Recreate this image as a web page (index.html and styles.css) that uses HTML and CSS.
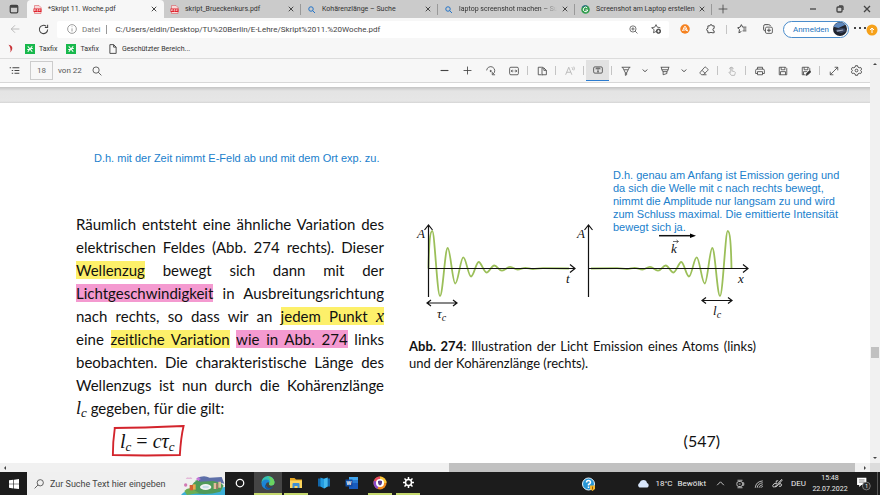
FILE: index.html
```html
<!DOCTYPE html>
<html lang="de">
<head>
  <meta charset="UTF-8">
  <meta name="viewport" content="width=device-width, initial-scale=1.0">
  <title>*Skript 11. Woche.pdf</title>
  <link rel="stylesheet" href="styles.css">
</head>
<body>
  <!-- Tabs -->
  <header class="tabs">
    <button class="tab-menu" aria-label="Tabaktionen">
      <svg class="ico s10" viewBox="0 0 16 16"><rect x="2" y="2" width="12" height="12" rx="2" stroke-width="2"/><path d="M2 4h12" stroke-width="4"/></svg>
    </button>
    <div class="tab active">
      <svg class="fav" viewBox="0 0 18 18"><path d="M3 1h9l4 4v12H3z" fill="#f6dada" stroke="#d8454c"/><path d="M1 7h16v7H1z" fill="#e0222c"/><path d="M3 12V9h2v2H3M8 9v3h2V9H8M13 12V9h2M13 11h2" fill="none" stroke="#fff"/></svg>
      <span class="tab-title">*Skript 11. Woche.pdf</span>
      <button class="close" aria-label="Tab schließen"><svg class="ico" viewBox="0 0 8 8"><path d="M1 1l6 6M7 1L1 7"/></svg></button>
    </div>
    <div class="tab">
      <svg class="fav" viewBox="0 0 18 18"><path d="M3 1h9l4 4v12H3z" fill="#f6dada" stroke="#d8454c"/><path d="M1 7h16v7H1z" fill="#e0222c"/><path d="M3 12V9h2v2H3M8 9v3h2V9H8M13 12V9h2M13 11h2" fill="none" stroke="#fff"/></svg>
      <span class="tab-title">skript_Brueckenkurs.pdf</span>
      <button class="close" aria-label="Tab schließen"><svg class="ico" viewBox="0 0 8 8"><path d="M1 1l6 6M7 1L1 7"/></svg></button>
    </div>
    <div class="tab">
      <svg class="fav" viewBox="0 0 18 18"><circle cx="8" cy="8" r="4.500" fill="none" stroke="#2474c8" stroke-width="2"/><path d="M11 11l5 5" stroke="#2474c8" stroke-width="2"/></svg>
      <span class="tab-title">Kohärenzlänge – Suche</span>
      <button class="close" aria-label="Tab schließen"><svg class="ico" viewBox="0 0 8 8"><path d="M1 1l6 6M7 1L1 7"/></svg></button>
    </div>
    <div class="tab">
      <svg class="fav" viewBox="0 0 18 18"><circle cx="8" cy="8" r="4.500" fill="none" stroke="#2474c8" stroke-width="2"/><path d="M11 11l5 5" stroke="#2474c8" stroke-width="2"/></svg>
      <span class="tab-title fade">laptop screenshot machen – Suc</span>
      <button class="close" aria-label="Tab schließen"><svg class="ico" viewBox="0 0 8 8"><path d="M1 1l6 6M7 1L1 7"/></svg></button>
    </div>
    <div class="tab">
      <svg class="fav" viewBox="0 0 18 18"><circle cx="9" cy="9" r="8.500" fill="#2f9d4c"/><path d="M9 .5a8.500 8.500 0 0 0-8 6c3-4 9-5 13-3A8 8 0 0 0 9 .5" fill="#2a5d9c"/><path d="M12.500 6a4.500 4.500 0 1 0 1 4H9" fill="none" stroke="#fff" stroke-width="2"/></svg>
      <span class="tab-title">Screenshot am Laptop erstellen</span>
      <button class="close" aria-label="Tab schließen"><svg class="ico" viewBox="0 0 8 8"><path d="M1 1l6 6M7 1L1 7"/></svg></button>
    </div>
    <button class="new-tab" aria-label="Neuer Tab"><svg class="ico s10" viewBox="0 0 16 16"><path d="M8 1v14M1 8h14"/></svg></button>
    <div class="window-buttons">
      <button aria-label="Minimieren"><svg class="ico s8" viewBox="0 0 8 8"><path d="M1 4h6"/></svg></button>
      <button aria-label="Wiederherstellen"><svg class="ico s8" viewBox="0 0 8 8"><rect x="1" y="2" width="5" height="5" rx="1"/><path d="M3 1h3q1 0 1 1v3"/></svg></button>
      <button aria-label="Schließen"><svg class="ico s8" viewBox="0 0 8 8"><path d="M1 1l6 6M7 1L1 7"/></svg></button>
    </div>
  </header>

  <!-- Adressleiste -->
  <nav class="address-bar">
    <button class="nav-btn disabled" aria-label="Zurück"><svg class="ico s10" viewBox="0 0 16 16"><path d="M15 8H2M8 2L2 8l6 6"/></svg></button>
    <button class="nav-btn" aria-label="Aktualisieren"><svg class="ico s11" viewBox="0 0 16 16"><path d="M14 8a6 6 0 1 1-2-4.500M14 1v4h-4" stroke-width="1.500"/></svg></button>
    <div class="url-box">
      <svg class="ico s10 muted" viewBox="0 0 16 16"><circle cx="8" cy="8" r="7"/><path d="M8 7v5M8 4v1"/></svg>
      <label class="scheme" for="url">Datei</label>
      <input id="url" type="text" value="C:/Users/eldin/Desktop/TU%20Berlin/E-Lehre/Skript%2011.%20Woche.pdf">
      <button aria-label="Zoom"><svg class="ico s9" viewBox="0 0 16 16"><circle cx="7" cy="7" r="5.500"/><path d="M11 11l4 4M4 7h6M7 4v6"/></svg></button>
      <button aria-label="Zu Favoriten hinzufügen"><svg class="ico s10" viewBox="0 0 16 16"><path d="M8 12l-4 2 1-5-4-3 5-1 2-4 2 4 5 1"/><circle cx="12" cy="11.500" r="3.500" fill="#555"/><path d="M12 9.500v4M10 11.500h4" stroke="#fff"/></svg></button>
    </div>
    <div class="extensions">
      <button aria-label="Avast"><svg class="s10" viewBox="0 0 20 20"><circle cx="10" cy="10" r="9.500" fill="#f58220"/><path d="M5 14l4-9q1-1 2 0l4 9-5-3-3 3M10 8v3" fill="none" stroke="#fff" stroke-width="2"/></svg></button>
      <button aria-label="Erweiterungen"><svg class="ico s10" viewBox="0 0 16 16"><path d="M3 3h3a2 2 0 0 1 4 0h3v4a2 2 0 0 0 0 4v3H9.500a2 2 0 0 0-3 0H3v-3a2 2 0 1 1 0-4z" stroke-width="1.500"/></svg></button>
      <i class="sep"></i>
      <button aria-label="Favoriten"><svg class="ico s10" viewBox="0 0 16 16"><path d="M7 12l-4 2 1-5-3-3 4-1 2-4 2 4h6M10 8h5M9 11h6" stroke-width="1.500"/></svg></button>
      <button aria-label="Sammlungen"><svg class="ico s10" viewBox="0 0 16 16"><rect x="4" y="5" width="11" height="10" rx="2"/><path d="M12 3q-1-2-3-2H3Q1 1 1 4v4q0 3 2 3M9.500 7v6M6.500 10h6" stroke-width="1.500"/></svg></button>
    </div>
    <button class="sign-in">Anmelden
      <svg class="avatar" viewBox="0 0 26 26"><circle cx="13" cy="13" r="13" fill="#20242e"/><path d="M1 9a13 13 0 0 1 22-4L10 11z" fill="#5d87bd"/><path d="M4 16q7-7 18-4l2 5-9 4z" fill="#3a4560"/><path d="M7 17l12-2" stroke="#a8b3c8" stroke-width="2"/></svg>
    </button>
    <button class="more" aria-label="Einstellungen und mehr">
      <svg viewBox="0 0 26 14"><path d="M2 6h2M7 6h2M12 6h2" stroke="#444" stroke-width="2"/><circle cx="20" cy="8" r="5.500" fill="#f6a11a"/><path d="M20 11V6M18 8l2-2 2 2" stroke="#fff" fill="none"/></svg>
    </button>
  </nav>

  <!-- Favoritenleiste -->
  <nav class="bookmarks">
    <svg class="s10" viewBox="0 0 16 16"><path d="M4 1q7 1 6 7-1 4-4 6 2-4 1-7-1-4-3-6" fill="#c9353a"/></svg>
    <a href="#"><svg class="s10" viewBox="0 0 18 18"><path d="M0 0h18v18H0z" fill="#18b84c"/><path d="M5 4l8 10M13 4L5 14M4 10h3M11 8h3" stroke="#fff" stroke-width="2"/></svg>Taxfix</a>
    <a href="#"><svg class="s10" viewBox="0 0 18 18"><path d="M0 0h18v18H0z" fill="#18b84c"/><path d="M5 4l8 10M13 4L5 14M4 10h3M11 8h3" stroke="#fff" stroke-width="2"/></svg>Taxfix</a>
    <a href="#"><svg class="ico s10" viewBox="0 0 16 16"><path d="M3 1h6l4 4v10H3zM9 1v4h4" stroke-width="1.500"/></svg>Geschützter Bereich...</a>
  </nav>

  <div class="content">
    <main class="viewer">
      <!-- PDF-Werkzeugleiste -->
      <div class="toolbar">
        <button class="tool toc" aria-label="Inhalt"><svg class="ico s11" viewBox="0 0 16 16"><path d="M5 4h10M8 8h7M8 12h7M1 4h2M4 8h2M4 12h2" stroke-width="1.500"/></svg></button>
        <input class="page-no" id="page-no" type="text" value="18">
        <label class="page-count" for="page-no">von 22</label>
        <button class="tool" aria-label="Suchen"><svg class="ico s10" viewBox="0 0 16 16"><circle cx="6.500" cy="6.500" r="5"/><path d="M10 10l5 5"/></svg></button>
        <div class="tools">
          <button class="tool" aria-label="Verkleinern"><svg class="ico s9" viewBox="0 0 16 16"><path d="M1 8h14" stroke-width="2"/></svg></button>
          <button class="tool" aria-label="Vergrößern"><svg class="ico s9" viewBox="0 0 16 16"><path d="M1 8h14M8 1v14" stroke-width="1.500"/></svg></button>
          <button class="tool" aria-label="Drehen"><svg class="ico s10" viewBox="0 0 16 16"><path d="M1 7a6.500 6.500 0 1 1 10 6M10 9.500V14h4.500" /><circle cx="7.500" cy="8" r="1" fill="#444"/></svg></button>
          <button class="tool" aria-label="An Breite anpassen"><svg class="ico s10" viewBox="0 0 16 16"><rect x="1" y="2" width="14" height="12" rx="2"/><path d="M4 8h3M9 8h3M5.500 6l-2 2 2 2M10.500 6l2 2-2 2"/></svg></button>
          <i class="sep"></i>
          <button class="tool" aria-label="Seitenansicht"><svg class="ico s10" viewBox="0 0 16 16"><path d="M7 2H2v12h5M8 1v14M8 3h3l4 4v7H8M11 3v4h4"/></svg></button>
          <i class="sep"></i>
          <button class="tool disabled" aria-label="Laut vorlesen"><svg class="ico s10" viewBox="0 0 16 16"><path d="M1 14L6 2l5 12M3 10h6M11 2q2 2 1 4M14 1q2 3 0 6"/></svg></button>
          <i class="sep"></i>
          <button class="tool selected" aria-label="Text hinzufügen"><svg class="ico s10" viewBox="0 0 16 16"><rect x="1" y="3" width="14" height="10" rx="2"/><path d="M5 7V5h6v2M8 5v6M6.500 11h3"/></svg></button>
          <i class="sep"></i>
          <button class="tool" aria-label="Zeichnen"><svg class="ico s10" viewBox="0 0 16 16"><path d="M1 2h14M2.500 2L7 11h2l4.500-9M5 6h6M7 11v4l2-1v-3"/></svg></button>
          <button class="tool narrow" aria-label="Stiftoptionen"><svg class="ico s6" viewBox="0 0 8 8"><path d="M1 2l3 3 3-3"/></svg></button>
          <button class="tool" aria-label="Hervorheben"><svg class="ico s10" viewBox="0 0 16 16"><path d="M1 2h14M2.500 2v3l2 4h7l2-4V2M3 6h10M5 9v5l6-2V9"/></svg></button>
          <button class="tool narrow" aria-label="Markeroptionen"><svg class="ico s6" viewBox="0 0 8 8"><path d="M1 2l3 3 3-3"/></svg></button>
          <button class="tool" aria-label="Löschen"><svg class="ico s10" viewBox="0 0 16 16"><path d="M9 2q1-1 2 0l3 3q1 1 0 2l-7 7H4l-2-2q-1-1 0-2zM5 7l5 5M7 14h5"/></svg></button>
          <i class="sep"></i>
          <button class="tool disabled" aria-label="Toucheingabe"><svg class="ico s10" viewBox="0 0 16 16"><path d="M6 10V3q1-2 2 0v5l4 1q2 1 1 3l-1 3H7L3 10q1-1 3 1M4 5a3 3 0 1 1 6 0"/></svg></button>
          <i class="sep"></i>
          <button class="tool" aria-label="Drucken"><svg class="ico s10" viewBox="0 0 16 16"><path d="M4 5V2h8v3M4 12H1V7q0-2 2-2h10q2 0 2 2v5h-3M4 9h8v5H4z"/></svg></button>
          <button class="tool" aria-label="Speichern"><svg class="ico s10" viewBox="0 0 16 16"><path d="M2 2h10l2 2v10H2zM5 2v4h6V2M4 14V9h8v5"/></svg></button>
          <button class="tool" aria-label="Speichern unter"><svg class="ico s10" viewBox="0 0 16 16"><path d="M7 14H2V2h10l2 2v3M5 2v4h6V2M4 14V9h6"/><path d="M8 15l1-3 5-5 2 2-5 5z" fill="#333"/></svg></button>
          <i class="sep"></i>
          <button class="tool" aria-label="Vollbild"><svg class="ico s10" viewBox="0 0 16 16"><path d="M2 14L14 2M9 2h5v5M2 9v5h5"/></svg></button>
          <button class="tool" aria-label="Einstellungen"><svg class="ico s11" viewBox="0 0 16 16"><path d="M6.500 1h3l.5 2 2 1 2-.5L15.500 6 14 8l1.500 2-1.500 2.500-2-.5-2 1-.5 2h-3L6 13l-2-1-2 .5L.5 10 2 8 .5 6 2 3.500 4 4l2-1z"/><circle cx="8" cy="8" r="2"/></svg></button>
        </div>
      </div>

      <div class="prev-page"></div>
      <div class="page-gap"></div>

      <article class="page">
        <p class="note note-left">D.h. mit der Zeit nimmt E-Feld ab und mit dem Ort exp. zu.</p>

        <section class="columns">
          <div class="text">
            <span class="line">Räumlich entsteht eine ähnliche Variation des</span>
            <span class="line">elektrischen Feldes (Abb. 274 rechts). Dieser</span>
            <span class="line"><mark>Wellenzug</mark> bewegt sich dann mit der</span>
            <span class="line"><mark class="pink">Lichtgeschwindigkeit</mark> in Ausbreitungsrichtung</span>
            <span class="line">nach rechts, so dass wir an <mark>jedem Punkt <var>x</var></mark></span>
            <span class="line">eine <mark>zeitliche Variation</mark> <mark class="pink">wie in Abb. 274</mark> links</span>
            <span class="line">beobachten. Die charakteristische Länge des</span>
            <span class="line">Wellenzugs ist nun durch die Kohärenzlänge</span>
            <span class="line last"><var>l<sub>c</sub></var> gegeben, für die gilt:</span>
          </div>

          <figure class="figure">
            <svg class="plot" viewBox="0 0 347 104">
              <defs>
                <path id="wave" d="M19.500 46.500C20 22 21 9 23.300 9S28.200 74 31 74 36 26 38.700 26 43.500 61.500 46.300 61.500 51.500 35.300 54.300 35.300 59.200 54.500 62 54.500 67 40 69.700 40 74.700 50.500 77.500 50.500 82.500 43.500 85.300 43.500 90 48.700 93 48.700 98 44.800 101 44.800 105.800 47.600 108.600 47.600 113.600 45.800 116.400 45.800 121 47 124 47 130 46.200 134 46.200L160 46.500"/>
              </defs>
              <use href="#wave" class="wave"/>
              <use href="#wave" class="wave" transform="translate(342 0) scale(-1 1)"/>
              <g class="axes">
                <path d="M19.500 75V3M15.500 8l4-5 4 5M19.500 46.500H166M161 42.500l5 4-5 4"/>
                <path d="M179.500 75V3M175.500 8l4-5 4 5M179.500 46.500H339M334 42.500l5 4-5 4"/>
                <path d="M18 81h30M22 78l-4 3 4 3M44 78l4 3-4 3"/>
                <path d="M293 78.500h30M297 75.500l-4 3 4 3M319 75.500l4 3-4 3"/>
                <path d="M250 13.700h32" stroke-width="1.500"/>
                <path d="M281 11.500l6 2.200-6 2.200z" fill="#000" stroke="none"/>
                <path d="M264 19.500h5M267.500 18l2 1.500-2 1.500" stroke-width=".6"/>
              </g>
              <g class="plot-labels">
                <text x="8" y="16">A</text>
                <text x="157" y="61">t</text>
                <text x="28" y="96">τ<tspan class="idx" dy="3">c</tspan></text>
                <text x="168" y="16">A</text>
                <text x="262" y="31">k</text>
                <text x="329" y="61">x</text>
                <text x="304" y="93">l<tspan class="idx" dy="3">c</tspan></text>
              </g>
            </svg>
            <p class="note note-right">D.h. genau am Anfang ist Emission gering und<br>da sich die Welle mit c nach rechts bewegt,<br>nimmt die Amplitude nur langsam zu und wird<br>zum Schluss maximal. Die emittierte Intensität<br>bewegt sich ja.</p>
            <figcaption>
              <span class="line"><b>Abb. 274</b>: Illustration der Licht Emission eines Atoms (links)</span>
              <span class="line last">und der Kohärenzlänge (rechts).</span>
            </figcaption>
          </figure>
        </section>

        <div class="equation">
          <div class="formula">
            <svg class="red-frame" viewBox="0 0 80 33" preserveAspectRatio="none"><path d="M3 3q30 0 75-2-3 12-4 30-37 1-72 0 0-14 2-27"/></svg>
            <var>l<sub>c</sub></var> = <var>cτ<sub>c</sub></var>
          </div>
          <span>(547)</span>
        </div>
      </article>
    </main>

    <div class="vscroll">
      <svg viewBox="0 0 10 10"><path d="M3 6l2-2 2 2z"/></svg>
      <i class="vthumb"></i>
      <svg viewBox="0 0 10 10"><path d="M3 4l2 2 2-2z"/></svg>
    </div>
  </div>

  <div class="hscroll">
    <svg viewBox="0 0 10 10"><path d="M6 3L4 5l2 2z"/></svg>
    <div class="htrack"><i class="hthumb"></i></div>
    <svg viewBox="0 0 10 10"><path d="M4 3l2 2-2 2z"/></svg>
    <i class="corner"></i>
  </div>

  <!-- Taskleiste -->
  <footer class="taskbar">
    <button class="start" aria-label="Start"><svg class="s10" viewBox="0 0 16 16"><path d="M0 2l7-1v6.500H0zM8 1l8-1v7.500H8zM0 8.500h7V15l-7-1zM8 8.500h8V16l-8-1z" fill="#fff"/></svg></button>
    <div class="search">
      <svg class="ico s10" viewBox="0 0 16 16"><circle cx="10" cy="6" r="5"/><path d="M6.500 9.500L1 15"/></svg>
      <input type="text" aria-label="Suche" placeholder="Zur Suche Text hier eingeben">
      <svg class="island" viewBox="0 0 132 66">
        <path d="M0 66q10-14 32-14l56-4 44-6v24z" fill="#3db0d8"/>
        <path d="M28 44q14-30 48-30 36 4 52 24l-10 18q-40 12-78 4z" fill="#4f9a58"/>
        <path d="M48 16q20-12 38-2l36-2 8 20-34-8-40 2z" fill="#5d6fa8"/>
        <path d="M10 54q10-12 24-6l20 12-36 6z" fill="#6cae52"/>
        <ellipse cx="74" cy="42" rx="17" ry="9" fill="#f1f4f4"/>
        <ellipse cx="74" cy="42" rx="10" ry="4" fill="#c7dfe8"/>
        <path d="M26 36h10v16H26z" fill="#d35f35"/><path d="M36 34h8v16h-8z" fill="#e9a94e"/>
        <path d="M98 30h8v18h-8zM112 26h8v18h-8z" fill="#e0bd9c"/><path d="M106 32h5v16h-5z" fill="#a16e62"/>
        <path d="M52 12v12M46 18h12" stroke="#c777da" stroke-width="4"/>
        <path d="M14 18q4-8 10-4 8-4 10 4z" fill="#e4b9d8"/><circle cx="14" cy="36" r="5" fill="#d27ab4"/>
      </svg>
    </div>
    <button class="app cortana" aria-label="Cortana"><svg class="s10" viewBox="0 0 16 16"><circle cx="8" cy="8" r="6" fill="none" stroke="#fff" stroke-width="2"/></svg></button>
    <button class="app focused running" aria-label="Edge"><svg class="s14" viewBox="0 0 28 28"><path d="M1 14A13 13 0 0 1 27 12q0 7-7 7-5 0-4-4 1-5-5-5-7 0-10 4" fill="#35c1b1"/><path d="M14 1a13 13 0 0 1 13 11q0 7-7 7-3 0-4-2 6-8-2-16" fill="#6bd35f"/><path d="M1 14q2-7 9-7 7 0 7 6-5-2-7 3-1 8 8 10-5 2-9 0-8-3-8-12" fill="#1c86d6"/><path d="M10 16q-1 8 7 8 5 0 8-4-5 9-14 6-6-4-1-10" fill="#0c57a6"/></svg></button>
    <button class="app running" aria-label="Explorer"><svg class="s14" viewBox="0 0 28 28"><path d="M2 4h9l3 3h12v5H2z" fill="#e6a520"/><path d="M2 9h24v15H2z" fill="#fbd45c"/><path d="M7 24v-8q0-2 2-2h10q2 0 2 2v8h-4v-4h-6v4z" fill="#3e8fd4"/></svg></button>
    <button class="app" aria-label="Karten"><svg class="s14" viewBox="0 0 28 28"><path d="M2 5h24v16H2z" fill="#1266a8"/><path d="M7 3l7 3 7-3v18l-7 4-7-4z" fill="#239be0"/><path d="M14 6l7-3v18l-7 4z" fill="#45b9ee"/></svg></button>
    <button class="app" aria-label="Word"><svg class="s14" viewBox="0 0 28 28"><path d="M8 2h18v6H8z" fill="#41a5ee"/><path d="M8 8h18v6H8z" fill="#2b7cd3"/><path d="M8 14h18v12H8z" fill="#185abd"/><path d="M1 7h14v14H1z" fill="#104a9e"/><text x="3" y="18" class="word-w">W</text></svg></button>
    <button class="app running" aria-label="Avast Secure Browser"><svg class="s14" viewBox="0 0 28 28"><circle cx="14" cy="14" r="13" fill="#f28a1e"/><path d="M14 1a13 13 0 0 1 13 13H14z" fill="#f9c73c"/><path d="M2 9A13 13 0 0 0 9 26l5-12z" fill="#8a49c8"/><path d="M2 9A13 13 0 0 1 14 1v13z" fill="#e84a5f"/><circle cx="14" cy="14" r="8" fill="#fff"/><path d="M14 9l4 1v4q-1 4-4 5-3-1-4-5v-4z" fill="#5a3c8c"/></svg></button>
    <button class="app running" aria-label="Einstellungen"><svg class="s11" viewBox="0 0 22 22"><circle cx="11" cy="11" r="6" fill="none" stroke="#fff" stroke-width="3"/><path d="M11 0v4M11 18v4M0 11h4M18 11h4M3 3l3 3M16 16l3 3M19 3l-3 3M6 16l-3 3" stroke="#fff" stroke-width="3"/></svg></button>

    <div class="tray">
      <button class="help" aria-label="Hilfe"><svg class="s14" viewBox="0 0 28 28"><circle cx="13" cy="14" r="12" fill="#2595d6" stroke="#e8f4fb" stroke-width="2"/><path d="M9 11q0-4 4-4t4 4q0 2-4 4v2M13 19v3" fill="none" stroke="#fff" stroke-width="3"/><path d="M16 17h10v7l-5 4-5-4z" fill="#f5b82e"/><path d="M21 19v6" stroke="#a05c00" stroke-width="2"/></svg></button>
      <button class="weather"><svg viewBox="0 0 26 18"><path d="M5 17a5 5 0 0 1 0-9q2-6 8-6 6 0 7 6a5 5 0 0 1 1 9z" fill="#d8e6fa"/></svg><span>18°C</span><span>Bewölkt</span></button>
      <button class="tray-btn" aria-label="Ausgeblendete Symbole"><svg class="ico s9" viewBox="0 0 16 16"><path d="M2 11l6-6 6 6" stroke-width="1.500"/></svg></button>
      <button class="tray-btn" aria-label="Energie"><svg class="ico s10" viewBox="0 0 16 16"><rect x="3" y="4" width="9" height="8" rx="3"/><path d="M12 6h2v4h-2M4 2h8M4 14h8M6 8h3"/></svg></button>
      <button class="tray-btn" aria-label="WLAN"><svg class="ico s10" viewBox="0 0 16 16"><path d="M2 14Q3 4 14 3M5 14q1-7 9-8M8 14q1-4 6-5M11 14q1-2 3-2"/></svg></button>
      <button class="tray-btn" aria-label="Stift"><svg class="ico s11" viewBox="0 0 16 16"><path d="M6 11L14 2l1 1-8 9-2 1zM9 4q-4-1-3 3M7 8q-5-1-6 3 0 3 3 2l2-2M10 9q4-2 4 1t-4 2"/></svg></button>
      <button class="lang">DEU</button>
      <button class="clock"><span>15:48</span><span>22.07.2022</span></button>
      <button class="notify" aria-label="Benachrichtigungen"><svg viewBox="0 0 42 42"><path d="M3 5h26v20H15l-6 6v-6H3z" fill="#fff"/><path d="M8 11h16M8 17h16" stroke="#555" stroke-width="2"/><circle cx="29" cy="28" r="11" fill="#2a2a2a" stroke="#999" stroke-width="2"/><text x="25" y="34" class="badge-no">1</text></svg></button>
    </div>
  </footer>
</body>
</html>
```
FILE: styles.css
```css
* { box-sizing: border-box; }
body { margin: 0; height: 100vh; display: flex; flex-direction: column; overflow: hidden; background: #fff; color: #333; font-family: Roboto, "Open Sans", sans-serif; font-size: 8px; }
button { padding: 0; border: none; background: none; color: inherit; font: inherit; display: flex; align-items: center; justify-content: center; flex: none; }
input { border: none; outline: none; padding: 0; margin: 0; background: none; color: inherit; font: inherit; min-width: 0; }
svg { display: block; flex: none; }

/* icons */
.ico { fill: none; stroke: #444; stroke-width: 1.3; }
.ico.muted { stroke: #888; }
.s6 { width: 6px; height: 6px; }
.s8 { width: 8px; height: 8px; }
.s9 { width: 9px; height: 9px; }
.s10 { width: 10px; height: 10px; }
.s11 { width: 11px; height: 11px; }
.s14 { width: 14px; height: 14px; }
.disabled { opacity: 0.4; }
.sep { width: 1px; height: 9px; margin: 0 2px; background: #c4c4c4; flex: none; }

/* tabs */
.tabs { display: flex; height: 18px; flex: none; background: #cbcbcb; font-size: 7px; }
.tab-menu { width: 27px; }
.tab { flex: 0 1 137px; min-width: 0; display: flex; align-items: center; padding: 0 6px; position: relative; }
.tab + .tab::after { content: ""; position: absolute; right: 0; top: 4px; height: 11px; width: 1px; background: #999; }
.tab.active { background: #f7f7f7; border-radius: 4px 4px 0 0; }
.fav { width: 9px; height: 9px; margin-right: 6px; }
.tab-title { flex: 1; min-width: 0; white-space: nowrap; }
.fade { -webkit-mask-image: linear-gradient(to right, #000 85%, transparent); mask-image: linear-gradient(to right, #000 85%, transparent); }
.close { width: 8px; margin-left: 4px; }
.close .ico { width: 6px; height: 6px; }
.new-tab { width: 22px; }
.window-buttons { margin-left: auto; display: flex; }
.window-buttons button { width: 27px; }

/* address bar */
.address-bar { display: flex; align-items: center; height: 22px; flex: none; background: #f7f7f7; }
.nav-btn { width: 26px; }
.nav-btn:first-child { width: 30px; }
.url-box { flex: 1; display: flex; align-items: center; height: 17px; margin-left: 1px; padding: 0 2px 0 10px; background: #fff; border-radius: 2px; }
.scheme { margin-left: 5px; padding-right: 6px; color: #777; }
.url-box input { flex: 1; padding-left: 8px; border-left: 1px solid #999; line-height: 9px; height: 9px; color: #444; }
.url-box button { width: 22px; }
.extensions { display: flex; align-items: center; padding: 0 2px 0 3px; }
.extensions button { width: 26px; }
.sign-in { height: 17px; padding: 0 1px 0 9px; gap: 4px; border: 1px solid #4a8ccb; border-radius: 9px; background: #fff; color: #2372bd; }
.avatar { width: 14px; height: 14px; }
.more { width: 31px; }
.more svg { width: 26px; height: 14px; }

/* bookmarks */
.bookmarks { display: flex; align-items: center; gap: 9px; height: 19px; flex: none; padding: 0 6px; background: #f7f7f7; border-bottom: 1px solid #dcdcdc; font-size: 7px; }
.bookmarks a { display: flex; align-items: center; gap: 4px; color: inherit; text-decoration: none; }

/* pdf viewer */
.content { flex: 1; min-height: 0; display: flex; }
.viewer { flex: 1; min-width: 0; display: flex; flex-direction: column; overflow: hidden; }
.toolbar { display: flex; align-items: center; height: 24px; flex: none; padding-right: 2px; background: #f7f7f7; border-bottom: 1px solid #d8d8d8; }
.tool { width: 23px; height: 21px; }
.tool.narrow { width: 16px; }
.tool.toc { width: 28px; }
.tool.selected { background: #e2e2e2; border-bottom: 1px solid #2b7cd0; }
.page-no { width: 23px; height: 19px; margin-left: 2px; border: 1px solid #ccc; text-align: center; color: #666; }
.page-count { padding: 0 4px 0 5px; color: #555; }
.tools { margin-left: auto; display: flex; align-items: center; }
.prev-page { height: 4px; flex: none; }
.page-gap { height: 16px; flex: none; background: linear-gradient(#c4c4c4, #e4e4e4 4px, #e6e6e6 14px, #d4d4d4); }
.page { position: relative; flex: 1; padding: 110px 114px 0 76px; color: #111; font-family: Lato, "Open Sans", sans-serif; font-size: 15px; font-variant-ligatures: none; }
.columns { display: grid; grid-template-columns: 308fr 347fr; gap: 25px; }
.line { display: block; white-space: nowrap; text-align: justify; text-align-last: justify; }
.line.last { text-align-last: left; }
.text { line-height: 23px; min-width: 0; }
mark { background: #fdf06a; color: inherit; }
mark.pink { background: #f49ad0; }
var { font-family: "Liberation Serif", serif; font-size: 18px; line-height: 1; }
sub { font-size: 13px; line-height: 0; vertical-align: -3px; }

.note { position: absolute; margin: 0; color: #2080cc; font: 11px/13px "Liberation Sans", Arial, sans-serif; white-space: nowrap; }
.note-left { left: 94px; top: 49px; }
.figure { position: relative; margin: 9px 0 0; min-width: 0; }
.note-right { left: 204px; top: -53px; }
.plot { width: 100%; overflow: visible; }
.wave { fill: none; stroke: #9bbf59; stroke-width: 1.8; }
.axes { fill: none; stroke: #111; stroke-width: 1.2; }
.plot-labels { fill: #111; font: italic 13px "Liberation Serif", serif; }
.idx { font-size: 10px; }
figcaption { margin-top: 12px; font-size: 13px; line-height: 17px; }

.equation { display: flex; align-items: center; justify-content: space-between; height: 31px; margin-top: 5px; padding: 0 36px 0 35px; font-size: 16px; }
.formula { position: relative; padding: 0 11px 0 9px; font-family: "Liberation Serif", serif; font-size: 20px; line-height: 24px; }
.formula var { font-size: 20px; }
.red-frame { position: absolute; left: 0; top: -4px; width: 100%; height: 32px; fill: none; stroke: #d3242c; stroke-width: 2; }

/* scrollbars */
.vscroll { width: 10px; display: flex; flex-direction: column; background: #f1f1f1; }
.vscroll svg, .hscroll svg { width: 10px; height: 10px; fill: #444; }
.vthumb { height: 11px; margin: 278px 1px auto; background: #c1c1c1; }
.hscroll { display: flex; align-items: center; height: 9px; flex: none; background: #f1f1f1; }
.htrack { flex: 1; align-self: stretch; display: flex; justify-content: flex-end; padding-right: 5px; }
.hthumb { width: 48%; background: #c1c1c1; }
.corner { width: 10px; align-self: stretch; background: #dcdcdc; }

/* taskbar */
.taskbar { display: flex; height: 23px; flex: none; background: #1c1c1c; color: #eee; }
.taskbar .tray .ico { stroke: #ddd; }
.start { width: 27px; }
.search { width: 198px; display: flex; align-items: center; padding-left: 7px; background: #f0f0f0; color: #444; font-size: 9px; }
.search input { flex: 1; margin-left: 6px; }
.search input::placeholder { color: #444; opacity: 1; }
.island { width: 44px; height: 22px; }
.app { width: 28px; border-bottom: 2px solid transparent; }
.app.cortana { width: 29px; }
.app.running { width: 24px; margin: 0 2px; border-color: #c5d86d; }
.app.focused { width: 28px; margin: 0; background: #454545; }
.word-w { fill: #fff; font: bold 10px "Open Sans", sans-serif; }
.tray { margin-left: auto; display: flex; }
.help { width: 18px; margin-right: 39px; }
.weather { gap: 5px; margin-right: 5px; }
.weather svg { width: 13px; height: 9px; }
.tray-btn { width: 19px; }
.lang { width: 23px; }
.clock { width: 40px; flex-direction: column; font-size: 7px; line-height: 11px; }
.notify { width: 28px; border-right: 1px solid #555; margin-right: 2px; }
.notify svg { width: 15px; height: 15px; }
.badge-no { fill: #fff; font: 16px "Open Sans", sans-serif; }
```
